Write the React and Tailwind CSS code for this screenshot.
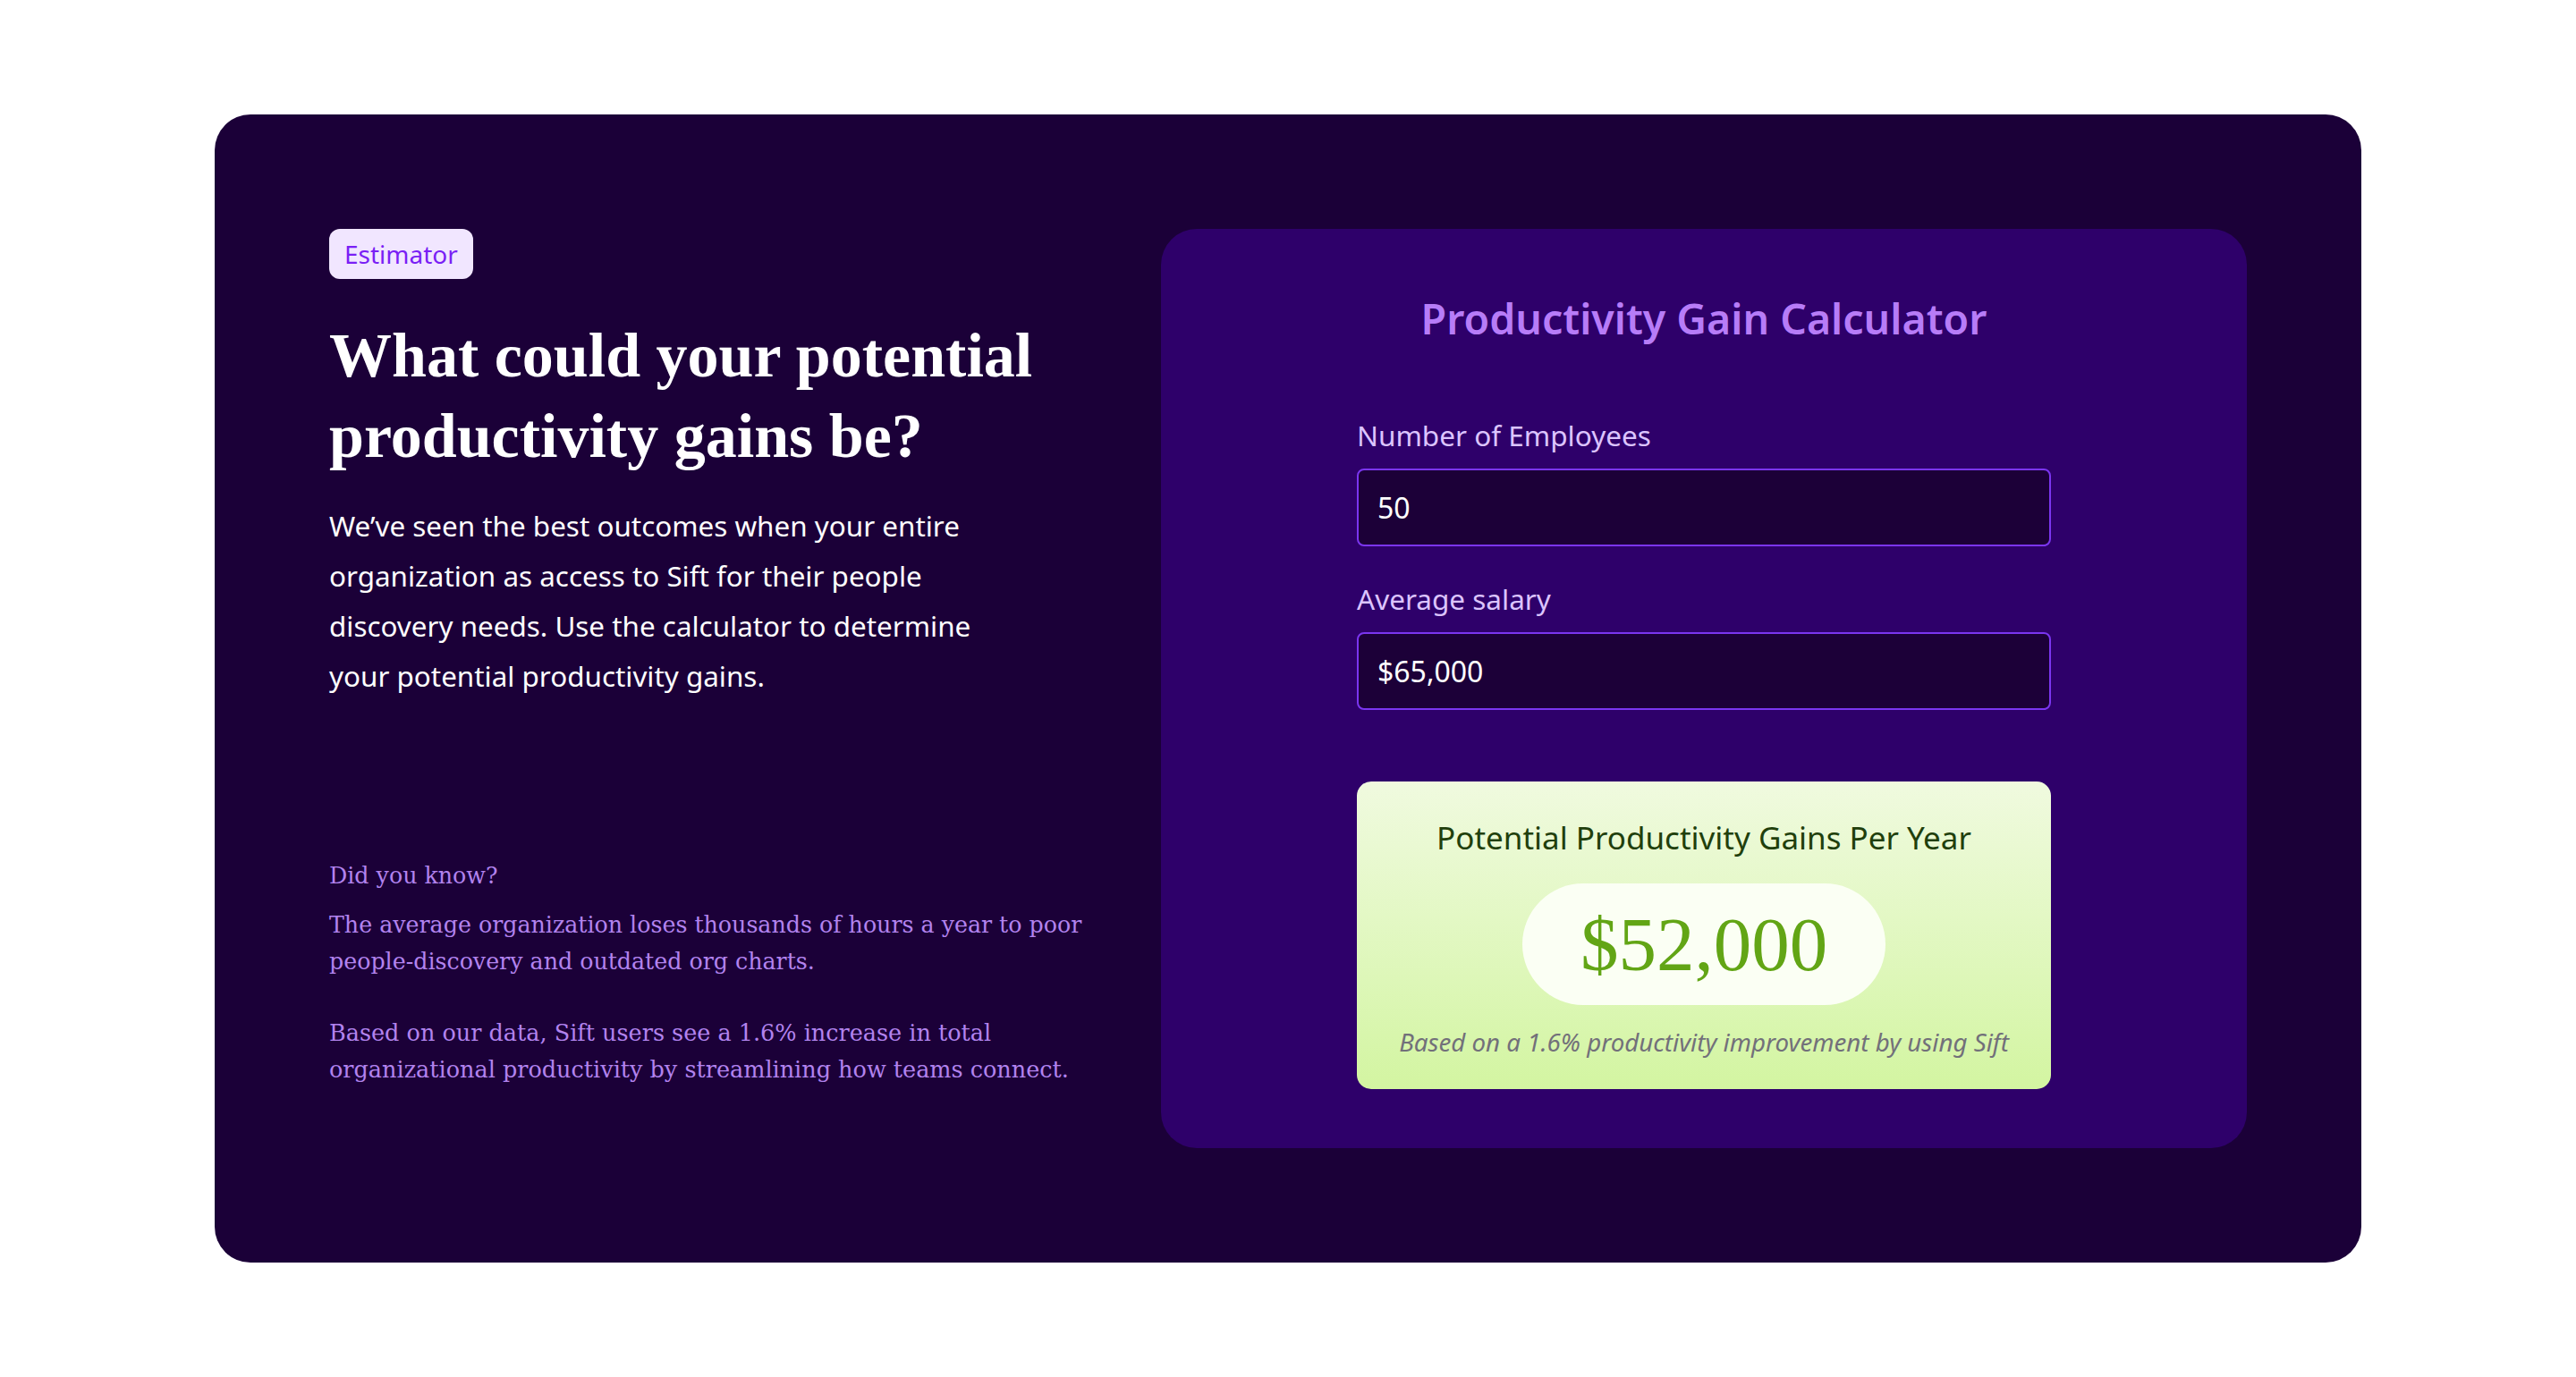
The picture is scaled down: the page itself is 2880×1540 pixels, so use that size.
import { useState } from 'react'

const sans = "font-['Noto_Sans',sans-serif]"
const serif = "font-['Liberation_Serif',serif]"
const bodySerif = "font-['DejaVu_Serif',serif]"

function Field({ label, value, onChange, className = '' }) {
  return (
    <label className={`flex flex-col ${className}`}>
      <span className="text-[31.5px] leading-[48px] text-[#dcc4ff]">{label}</span>
      <input
        type="text"
        value={value}
        onChange={(e) => onChange(e.target.value)}
        className="mt-[13px] h-[87px] w-full rounded-[8px] border-2 border-[#7b35f0] bg-[#1c0038] px-[21px] text-[32px] text-white outline-none"
      />
    </label>
  )
}

export default function App() {
  const [employees, setEmployees] = useState('50')
  const [salary, setSalary] = useState('$65,000')

  const n = parseInt(employees.replace(/[^0-9]/g, ''), 10) || 0
  const s = parseInt(salary.replace(/[^0-9]/g, ''), 10) || 0
  const gain = Math.round(n * s * 0.016)

  return (
    <div className={`min-h-screen bg-white flex justify-center pt-[128px] pb-[128px] ${sans}`}>
      <div className="w-[2400px] rounded-[40px] bg-[#1b0038] p-[128px] flex gap-[50px]">
        {/* Left copy */}
        <div className="w-[880px] flex flex-col items-start">
          <span className="h-[56px] px-[17px] flex items-center rounded-[12px] bg-[#f1e6ff] text-[28px] text-[#7a1ff5]">
            Estimator
          </span>
          <h1 className={`mt-[41px] max-w-[802px] text-[70px] leading-[90px] font-bold text-white ${serif}`}>
            What could your potential productivity gains be?
          </h1>
          <p className="mt-[27px] max-w-[740px] text-[31.4px] leading-[56px] text-white">
            We’ve seen the best outcomes when your entire organization as access to Sift for their people
            discovery needs. Use the calculator to determine your potential productivity gains.
          </p>

          <div className={`mt-[175px] text-[#b283ee] ${bodySerif}`}>
            <p className="text-[25.3px] leading-[41px]">Did you know?</p>
            <p className="mt-[14px] text-[25.3px] leading-[41px]">
              The average organization loses thousands of hours a year to poor people-discovery and outdated org charts.
            </p>
            <p className="mt-[39px] text-[25.5px] leading-[41px]">
              Based on our data, Sift users see a 1.6% increase in total organizational productivity by streamlining how teams connect.
            </p>
          </div>
        </div>

        {/* Calculator */}
        <div className="flex-1 rounded-[40px] bg-[#2e006a] pt-[68px] pb-[64px] flex flex-col items-center">
          <h2 className="text-[46.5px] leading-[64px] font-semibold text-[#b77cf8]">Productivity Gain Calculator</h2>

          <div className="w-[776px] mt-[75px] flex flex-col">
            <Field label="Number of Employees" value={employees} onChange={setEmployees} />
            <Field label="Average salary" value={salary} onChange={setSalary} className="mt-[35px]" />

            <div className="mt-[80px] h-[344px] rounded-[16px] bg-gradient-to-b from-[#f0fadf] to-[#d3f5a1] pt-[39px] flex flex-col items-center">
              <p className="text-[35px] leading-[48px] text-[#213f0c]">Potential Productivity Gains Per Year</p>
              <div className="mt-[27px] w-[406px] h-[136px] rounded-full bg-[#fbfff4] flex items-center justify-center">
                <span className={`text-[85px] leading-none text-[#62a515] ${serif}`}>
                  ${gain.toLocaleString('en-US')}
                </span>
              </div>
              <p className="mt-[22px] text-[27.7px] leading-[38px] italic text-[#72707a]">
                Based on a 1.6% productivity improvement by using Sift
              </p>
            </div>
          </div>
        </div>
      </div>
    </div>
  )
}
